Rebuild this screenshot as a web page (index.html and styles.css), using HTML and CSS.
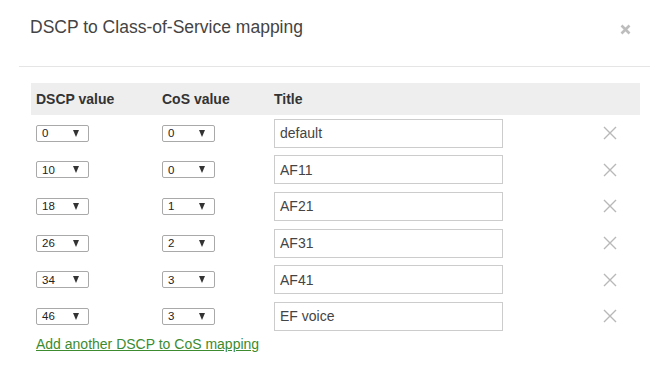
FILE: index.html
```html
<!DOCTYPE html>
<html>
<head>
<meta charset="utf-8">
<link rel="stylesheet" href="styles.css">
</head>
<body>
<div class="modal">
  <div class="modal-header">
    <h1 class="modal-title">DSCP to Class-of-Service mapping</h1>
    <span class="close-btn" aria-label="Close">
      <svg width="11" height="11" viewBox="0 0 11 11"><path d="M1.5 1.5L9.5 9.5M9.5 1.5L1.5 9.5" stroke="#bdbdbd" stroke-width="2.6" stroke-linecap="butt"/></svg>
    </span>
  </div>
  <div class="modal-body">
    <div class="grid head">
      <div>DSCP value</div>
      <div>CoS value</div>
      <div>Title</div>
      <div></div>
    </div>
    <div class="rows">
      <div class="grid row">
        <div><span class="sel"><span class="val">0</span><span class="arr"></span></span></div>
        <div><span class="sel"><span class="val">0</span><span class="arr"></span></span></div>
        <div><input class="txt" type="text" value="default"></div>
        <div class="del"><svg width="14" height="14" viewBox="0 0 14 14"><path d="M1 1L13 13M13 1L1 13" stroke="#b8b8b8" stroke-width="1.4"/></svg></div>
      </div>
      <div class="grid row">
        <div><span class="sel"><span class="val">10</span><span class="arr"></span></span></div>
        <div><span class="sel"><span class="val">0</span><span class="arr"></span></span></div>
        <div><input class="txt" type="text" value="AF11"></div>
        <div class="del"><svg width="14" height="14" viewBox="0 0 14 14"><path d="M1 1L13 13M13 1L1 13" stroke="#b8b8b8" stroke-width="1.4"/></svg></div>
      </div>
      <div class="grid row">
        <div><span class="sel"><span class="val">18</span><span class="arr"></span></span></div>
        <div><span class="sel"><span class="val">1</span><span class="arr"></span></span></div>
        <div><input class="txt" type="text" value="AF21"></div>
        <div class="del"><svg width="14" height="14" viewBox="0 0 14 14"><path d="M1 1L13 13M13 1L1 13" stroke="#b8b8b8" stroke-width="1.4"/></svg></div>
      </div>
      <div class="grid row">
        <div><span class="sel"><span class="val">26</span><span class="arr"></span></span></div>
        <div><span class="sel"><span class="val">2</span><span class="arr"></span></span></div>
        <div><input class="txt" type="text" value="AF31"></div>
        <div class="del"><svg width="14" height="14" viewBox="0 0 14 14"><path d="M1 1L13 13M13 1L1 13" stroke="#b8b8b8" stroke-width="1.4"/></svg></div>
      </div>
      <div class="grid row">
        <div><span class="sel"><span class="val">34</span><span class="arr"></span></span></div>
        <div><span class="sel"><span class="val">3</span><span class="arr"></span></span></div>
        <div><input class="txt" type="text" value="AF41"></div>
        <div class="del"><svg width="14" height="14" viewBox="0 0 14 14"><path d="M1 1L13 13M13 1L1 13" stroke="#b8b8b8" stroke-width="1.4"/></svg></div>
      </div>
      <div class="grid row">
        <div><span class="sel"><span class="val">46</span><span class="arr"></span></span></div>
        <div><span class="sel"><span class="val">3</span><span class="arr"></span></span></div>
        <div><input class="txt" type="text" value="EF voice"></div>
        <div class="del"><svg width="14" height="14" viewBox="0 0 14 14"><path d="M1 1L13 13M13 1L1 13" stroke="#b8b8b8" stroke-width="1.4"/></svg></div>
      </div>
    </div>
    <a class="add-link" href="#">Add another DSCP to CoS mapping</a>
  </div>
</div>
</body>
</html>
```

FILE: styles.css
```css
html, body {
  margin: 0;
  padding: 0;
  background: #fff;
}
body {
  font-family: "Liberation Sans", Arial, sans-serif;
  color: #333;
}
.modal {
  width: 658px;
}
.modal-header {
  margin: 0 8px 0 19px;
  padding: 17px 19px 29px 11px;
  border-bottom: 1px solid #e5e5e5;
  display: flex;
  justify-content: space-between;
  align-items: flex-start;
}
.modal-title {
  margin: 0;
  font-size: 17.5px;
  line-height: 20px;
  font-weight: normal;
  color: #444;
}
.close-btn {
  display: block;
  width: 11px;
  height: 11px;
  margin-top: 7px;
}
.close-btn svg {
  display: block;
}
.modal-body {
  margin: 16px 18px 0 31px;
}
.grid {
  display: grid;
  grid-template-columns: 126px 112px 329px 14px;
  padding-left: 5px;
  align-items: center;
}
.head {
  background: #eeeeee;
  height: 32px;
  font-weight: bold;
  font-size: 14px;
  line-height: 32px;
  color: #333;
}
.row {
  height: 36.6px;
}
.row > div {
  display: flex;
  align-items: center;
}
.sel {
  box-sizing: border-box;
  width: 53px;
  height: 17px;
  border: 1px solid #a9a9a9;
  border-radius: 2px;
  display: flex;
  align-items: center;
  justify-content: space-between;
  padding: 0 9px 0 5px;
  font-size: 11.5px;
  color: #222;
  background: #fff;
}
.arr {
  width: 0;
  height: 0;
  border-left: 3.5px solid transparent;
  border-right: 3.5px solid transparent;
  border-top: 7px solid #333;
}
.txt {
  box-sizing: border-box;
  width: 229px;
  height: 29px;
  margin: 0;
  border: 1px solid #cccccc;
  border-radius: 0;
  padding: 0 5px;
  font-family: "Liberation Sans", Arial, sans-serif;
  font-size: 14px;
  color: #444;
  background: #fff;
  outline: none;
}
.del svg {
  display: block;
}
.add-link {
  display: inline-block;
  margin-left: 5px;
  margin-top: 0;
  font-size: 14px;
  line-height: 16px;
  color: #3d8b2f;
  text-decoration: underline;
}
```
